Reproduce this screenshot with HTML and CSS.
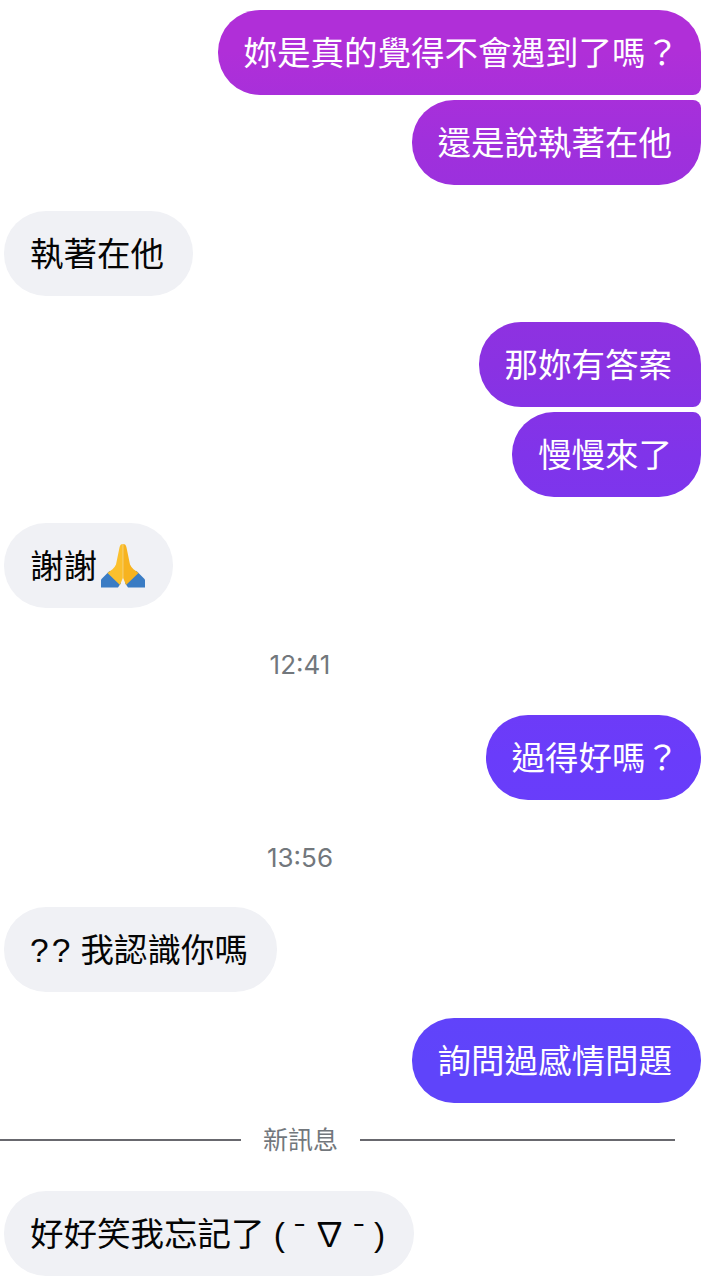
FILE: index.html
```html
<!DOCTYPE html>
<html>

<head>
    <title>Chat</title>
    <link rel="stylesheet" href="styles.css">
</head>

<body>

    <div class="thread">
        <div class="msg msg-me msg-top">妳是真的覺得不會遇到了嗎<span class="mark">？</span></div>
        <div class="msg msg-me msg-next">還是說執著在他</div>

        <div class="msg msg-them">執著在他</div>

        <div class="msg msg-me msg-first msg-top">那妳有答案</div>
        <div class="msg msg-me msg-next">慢慢來了</div>

        <div class="msg msg-them">謝謝<svg class="emoji" viewBox="0 0 46 44" aria-hidden="true">
                <path fill="#3a7cc4" d="M1 35.500 L9.500 27 L21 39 L18 43.500 L1 43.500 Z" />
                <path fill="#3a7cc4" d="M45 35.500 L36.500 27 L25 39 L28 43.500 L45 43.500 Z" />
                <path fill="#fbc02d" d="M22.800 0 C21 0 20 1 19.500 3.500 L16 20.500 C14.500 24 11 26.500 7.500 29 L20 41 L22.800 34 Z" />
                <path fill="#f7b31f" d="M23.200 0 C25 0 26 1 26.500 3.500 L30 20.500 C31.500 24 35 26.500 38.500 29 L26 41 L23.200 34 Z" />
            </svg></div>

        <div class="time time-a">12:41</div>
        <div class="msg msg-me">過得好嗎<span class="mark">？</span></div>

        <div class="time time-b">13:56</div>
        <div class="msg msg-them msg-close"><span class="pair">??</span> 我認識你嗎</div>

        <div class="msg msg-me msg-first">詢問過感情問題</div>

        <div class="divider">
            <span class="divider-line divider-left"></span>
            <span class="divider-text">新訊息</span>
            <span class="divider-line divider-right"></span>
        </div>

        <div class="msg msg-them msg-last">好好笑我忘記了 ( ˉ <span class="nabla">∇</span> ˉ )</div>
    </div>

</body>

</html>
```

FILE: styles.css
```css
html,
body {
    height: 1280px;
    overflow: hidden;
}

body {
    font-family: "Liberation Sans", "Noto Sans CJK TC", sans-serif;
    background: white;
    margin: 0;
}

.thread {
    display: flex;
    flex-direction: column;
    padding: 10px 16px 0 4px;
}

.msg {
    height: 85px;
    padding: 0 29px 0 26px;
    box-sizing: border-box;
    border-radius: 42px;
    font-size: 33.5px;
    line-height: 87px;
    white-space: nowrap;
}

/* gradient is fixed to the window so each bubble shows its own slice */
.msg-me {
    align-self: flex-end;
    color: white;
    background: linear-gradient(180deg, #b02fd8 4%, #a030dc 11%, #8a32e2 28.5%, #8034ea 35.5%, #6a3cfa 59%, #5f44fa 83%) fixed;
}

.msg-top {
    border-bottom-right-radius: 8px;
}

.msg-next {
    margin-top: 5px;
    border-top-right-radius: 8px;
}

.msg-first {
    margin-top: 26px;
}

.msg-them {
    align-self: flex-start;
    color: #050505;
    background: #f0f1f5;
    margin-top: 26px;
}

.msg-close {
    margin-top: 0;
}

.msg-last {
    margin-top: 14px;
}

.mark {
    margin-right: -7px;
}

.pair {
    letter-spacing: 3px;
    margin-right: -2px;
}

.nabla {
    margin: 0 -2px;
}

.emoji {
    width: 46px;
    height: 44px;
    margin-left: 3px;
    margin-right: -2px;
    vertical-align: -10px;
}

.time {
    width: 600px;
    margin-left: -4px;
    text-align: center;
    color: #72777c;
    font-family: "Inter", sans-serif;
    font-size: 26px;
    line-height: 30px;
}

.time-a {
    margin-top: 42px;
    margin-bottom: 35px;
}

.time-b {
    margin-top: 43px;
    margin-bottom: 34px;
}

.divider {
    display: flex;
    align-items: center;
    gap: 22px;
    height: 74px;
    margin: 0 26px 0 -4px;
}

.divider-text {
    color: #72777c;
    font-size: 25px;
    line-height: 26px;
}

.divider-line {
    height: 2px;
    background: #68686e;
}

.divider-left {
    width: 241px;
}

.divider-right {
    flex: 1;
}
```
